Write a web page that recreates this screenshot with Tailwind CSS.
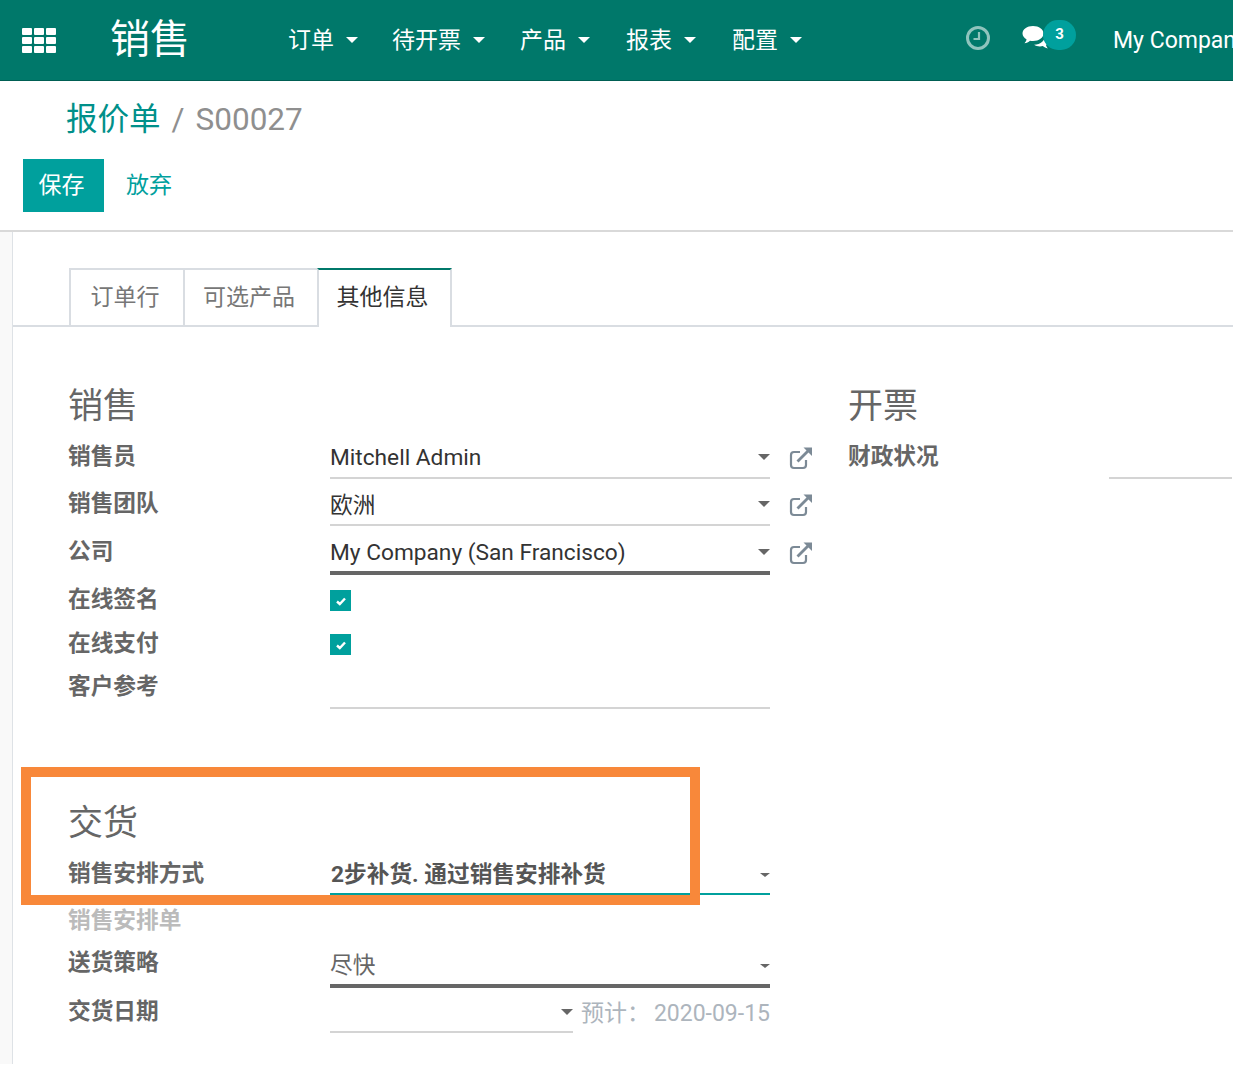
<!DOCTYPE html>
<html lang="zh">
<head>
    <meta charset="UTF-8">
    <title>报价单 / S00027</title>
    <script src="https://cdn.jsdelivr.net/npm/@tailwindcss/browser@4"></script>
</head>
<body class="bg-white h-[1068px] overflow-hidden font-['Roboto','Noto_Sans_CJK_SC',sans-serif] text-[#666]">
    <!-- Navbar -->
    <header class="h-[81px] bg-[#00786a] border-b border-[#005f54] flex items-center text-white overflow-hidden">
        <div class="ml-[22px] w-[34px] shrink-0 grid grid-cols-3 gap-[2px]">
            <span class="h-[7px] bg-white rounded-[1px]"></span><span class="h-[7px] bg-white rounded-[1px]"></span><span class="h-[7px] bg-white rounded-[1px]"></span>
            <span class="h-[7px] bg-white rounded-[1px]"></span><span class="h-[7px] bg-white rounded-[1px]"></span><span class="h-[7px] bg-white rounded-[1px]"></span>
            <span class="h-[7px] bg-white rounded-[1px]"></span><span class="h-[7px] bg-white rounded-[1px]"></span><span class="h-[7px] bg-white rounded-[1px]"></span>
        </div>
        <div class="ml-[54px] w-[178px] shrink-0 text-[40px] leading-none">销售</div>
        <nav class="flex items-center shrink-0 text-[23px] leading-none">
            <div class="w-[104px] flex items-center gap-[12px]">订单<span class="border-x-[6px] border-t-[6px] border-x-transparent border-t-white"></span></div>
            <div class="w-[128px] flex items-center gap-[12px]">待开票<span class="border-x-[6px] border-t-[6px] border-x-transparent border-t-white"></span></div>
            <div class="w-[106px] flex items-center gap-[12px]">产品<span class="border-x-[6px] border-t-[6px] border-x-transparent border-t-white"></span></div>
            <div class="w-[106px] flex items-center gap-[12px]">报表<span class="border-x-[6px] border-t-[6px] border-x-transparent border-t-white"></span></div>
            <div class="w-[233px] flex items-center gap-[12px]">配置<span class="border-x-[6px] border-t-[6px] border-x-transparent border-t-white"></span></div>
        </nav>
        <svg class="w-[26px] h-[26px] -mt-[5px] shrink-0" viewBox="0 0 26 26" fill="none" stroke="#8fc4bd" stroke-width="3"><circle cx="13" cy="13" r="10.5"/><path d="M14 7v7H8.5" stroke-width="2.2"/></svg>
        <div class="relative ml-[31px] w-[55px] h-[36px] -mt-[5px] shrink-0">
            <svg class="absolute left-0 top-[5px] w-[28px] h-[26px]" viewBox="0 0 28 26" fill="#fff">
                <path d="M11 1c6 0 10.500 3.300 10.500 7.500S17 16 11 16c-1 0-2-.1-3-.3C6.500 17 4.500 18 2.500 18.200c1-1 1.800-2.300 2-3.900C2.200 13 .5 10.900.5 8.500.5 4.300 5 1 11 1z"/>
                <path d="M23 9.500c2.600 1.200 4.300 3.200 4.300 5.400 0 2-1.300 3.700-3.300 4.900.2 1.500.9 2.700 1.800 3.600-1.900-.2-3.700-1.100-5-2.300-.9.200-1.800.3-2.800.3-2.300 0-4.400-.6-5.900-1.600 6.500-.2 11.600-4.500 10.900-10.300z"/>
            </svg>
            <span class="absolute left-[21px] top-0 w-[33px] h-[30px] rounded-full bg-[#00a09d] text-[15px] font-bold flex items-center justify-center">3</span>
        </div>
        <div class="ml-[36px] text-[23px] leading-none whitespace-nowrap shrink-0">My Company (San Francisco)</div>
    </header>

    <!-- Control panel -->
    <section class="h-[151px] border-b-2 border-[#d9d9d9]">
        <div class="pl-[66px] pt-[20px] h-[78px] flex text-[31.500px] leading-[38px] text-[#8f8f8f]"><span class="text-[#00908a]">报价单</span><span class="ml-[11px]">/</span><span class="ml-[11px]">S00027</span></div>
        <div class="pl-[23px] flex items-center">
            <button class="w-[81px] h-[53px] pr-[4px] pt-[2px] bg-[#00a09d] text-white text-[23px]">保存</button>
            <button class="ml-[22px] pt-[2px] text-[#00a09d] text-[23px]">放弃</button>
        </div>
    </section>

    <main class="h-[832px] flex">
        <aside class="w-[13px] shrink-0 bg-[#f9f9f9] border-r border-[#dee2e6]"></aside>
        <div class="w-[1220px] shrink-0">
            <!-- Tabs -->
            <div class="pt-[36px]">
                <div class="h-[59px] border-b-2 border-[#d9dde2] pl-[56px] flex text-[23px] leading-[30px]">
                    <div class="w-[114px] h-[58px] pr-[4px] border-l-2 border-t-2 border-[#d9dde2] flex items-center justify-center text-[#777]">订单行</div>
                    <div class="w-[134px] h-[58px] pr-[4px] border-l-2 border-t-2 border-[#d9dde2] flex items-center justify-center text-[#777]">可选产品</div>
                    <div class="w-[135px] h-[59px] pr-[4px] pb-[2px] border-x-2 border-t-2 border-x-[#d9dde2] border-t-[#00786a] bg-white flex items-center justify-center text-[#333]">其他信息</div>
                </div>
            </div>

            <!-- Form -->
            <div class="pl-[55px] flex">
                <div class="w-[702px] shrink-0">
                    <h2 class="h-[105px] pt-[55px] text-[35px] leading-[50px]">销售</h2>
                    <div class="flex h-[47px]">
                        <label class="w-[262px] shrink-0 pt-[9px] text-[22.700px] leading-[32px] font-bold">销售员</label>
                        <div class="w-[440px] shrink-0 h-[47px] pt-[8px] border-b-2 border-[#d4d4d4] flex items-center justify-between text-[22.700px] text-[#333]">Mitchell Admin<span class="-mt-[4px] border-x-[6px] border-t-[6px] border-x-transparent border-t-[#666]"></span></div>
                        <svg class="ml-[19px] mt-[14px] w-[24px] h-[24px] shrink-0" viewBox="0 0 24 24" fill="none" stroke="#7c8a96" stroke-width="2.200"><path d="M17 14v5a3 3 0 0 1-3 3H5a3 3 0 0 1-3-3V9a3 3 0 0 1 3-3h6"/><path d="M8.500 15.500L19 5" stroke-width="2.800"/><path d="M14.500 1.500H23V10z" fill="#7c8a96" stroke="none"/></svg>
                    </div>
                    <div class="flex h-[47px]">
                        <label class="w-[262px] shrink-0 pt-[9px] text-[22.700px] leading-[32px] font-bold">销售团队</label>
                        <div class="w-[440px] shrink-0 h-[47px] pt-[10px] border-b-2 border-[#d4d4d4] flex items-center justify-between text-[22.700px] text-[#333]">欧洲<span class="-mt-[6px] border-x-[6px] border-t-[6px] border-x-transparent border-t-[#666]"></span></div>
                        <svg class="ml-[19px] mt-[14px] w-[24px] h-[24px] shrink-0" viewBox="0 0 24 24" fill="none" stroke="#7c8a96" stroke-width="2.200"><path d="M17 14v5a3 3 0 0 1-3 3H5a3 3 0 0 1-3-3V9a3 3 0 0 1 3-3h6"/><path d="M8.500 15.500L19 5" stroke-width="2.800"/><path d="M14.500 1.500H23V10z" fill="#7c8a96" stroke="none"/></svg>
                    </div>
                    <div class="flex h-[49px]">
                        <label class="w-[262px] shrink-0 pt-[10px] text-[22.700px] leading-[32px] font-bold">公司</label>
                        <div class="w-[440px] shrink-0 h-[49px] pt-[10px] border-b-4 border-[#666] flex items-center justify-between text-[22.700px] text-[#333]">My Company (San Francisco)<span class="-mt-[4px] border-x-[6px] border-t-[6px] border-x-transparent border-t-[#666]"></span></div>
                        <svg class="ml-[19px] mt-[15px] w-[24px] h-[24px] shrink-0" viewBox="0 0 24 24" fill="none" stroke="#7c8a96" stroke-width="2.200"><path d="M17 14v5a3 3 0 0 1-3 3H5a3 3 0 0 1-3-3V9a3 3 0 0 1 3-3h6"/><path d="M8.500 15.500L19 5" stroke-width="2.800"/><path d="M14.500 1.500H23V10z" fill="#7c8a96" stroke="none"/></svg>
                    </div>
                    <div class="flex h-[47px]">
                        <label class="w-[262px] shrink-0 pt-[9px] text-[22.700px] leading-[32px] font-bold">在线签名</label>
                        <span class="mt-[15px] w-[21px] h-[21px] bg-[#00a09d] flex items-center justify-center"><svg class="w-[12px] h-[12px]" viewBox="0 0 12 12" fill="none" stroke="#fff" stroke-width="2.400"><path d="M2 6.500l2.800 2.500L10 3.500"/></svg></span>
                    </div>
                    <div class="flex h-[42px]">
                        <label class="w-[262px] shrink-0 pt-[6px] text-[22.700px] leading-[32px] font-bold">在线支付</label>
                        <span class="mt-[12px] w-[21px] h-[21px] bg-[#00a09d] flex items-center justify-center"><svg class="w-[12px] h-[12px]" viewBox="0 0 12 12" fill="none" stroke="#fff" stroke-width="2.400"><path d="M2 6.500l2.800 2.500L10 3.500"/></svg></span>
                    </div>
                    <div class="flex h-[45px]">
                        <label class="w-[262px] shrink-0 pt-[7px] text-[22.700px] leading-[32px] font-bold">客户参考</label>
                        <div class="w-[440px] shrink-0 h-[45px] border-b-2 border-[#d4d4d4]"></div>
                    </div>

                    <div class="relative">
                        <!-- highlight drawn over the screenshot -->
                        <div class="absolute left-[-47px] top-[58px] w-[679px] h-[138px] border-[10px] border-[#f8883a] z-10"></div>
                        <h2 class="h-[161px] pt-[90px] text-[35px] leading-[50px]">交货</h2>
                        <div class="flex h-[47px] -mt-[21px]">
                            <label class="w-[262px] shrink-0 pt-[9px] text-[22.700px] leading-[32px] font-bold">销售安排方式</label>
                            <div class="w-[440px] shrink-0 h-[46px] pl-[1px] pt-[8px] border-b-2 border-[#00a09d] flex items-center justify-between text-[22.700px] font-bold text-[#555]">2步补货. 通过销售安排补货<span class="border-x-[5px] border-t-[4px] border-x-transparent border-t-[#666]"></span></div>
                        </div>
                        <div class="h-[42px] pt-[9px]">
                            <label class="text-[22.700px] leading-[32px] font-bold text-[#bbb]">销售安排单</label>
                        </div>
                        <div class="flex h-[50px]">
                            <label class="w-[262px] shrink-0 pt-[9px] text-[22.700px] leading-[32px] font-bold">送货策略</label>
                            <div class="w-[440px] shrink-0 h-[50px] border-b-4 border-[#666] flex items-center justify-between text-[22.700px] pt-[10px]">尽快<span class="border-x-[5px] border-t-[4px] border-x-transparent border-t-[#666]"></span></div>
                        </div>
                        <div class="flex h-[46px]">
                            <label class="w-[262px] shrink-0 pt-[8px] text-[22.700px] leading-[32px] font-bold">交货日期</label>
                            <div class="w-[243px] shrink-0 h-[45px] pt-[4px] border-b-2 border-[#d4d4d4] flex items-center justify-end"><span class="border-x-[6px] border-t-[6px] border-x-transparent border-t-[#666]"></span></div>
                            <div class="w-[197px] shrink-0 pl-[8px] pt-[11px] flex justify-between text-[23px] leading-[30px] text-[#adb5bd]"><span>预计：</span><span>2020-09-15</span></div>
                        </div>
                    </div>
                </div>

                <div class="ml-[78px] w-[384px] shrink-0">
                    <h2 class="h-[105px] pt-[55px] text-[35px] leading-[50px]">开票</h2>
                    <div class="flex h-[47px]">
                        <label class="w-[261px] shrink-0 pt-[9px] text-[22.700px] leading-[32px] font-bold">财政状况</label>
                        <div class="w-[123px] shrink-0 h-[47px] border-b-2 border-[#d4d4d4]"></div>
                    </div>
                </div>
            </div>
        </div>
    </main>
</body>
</html>
